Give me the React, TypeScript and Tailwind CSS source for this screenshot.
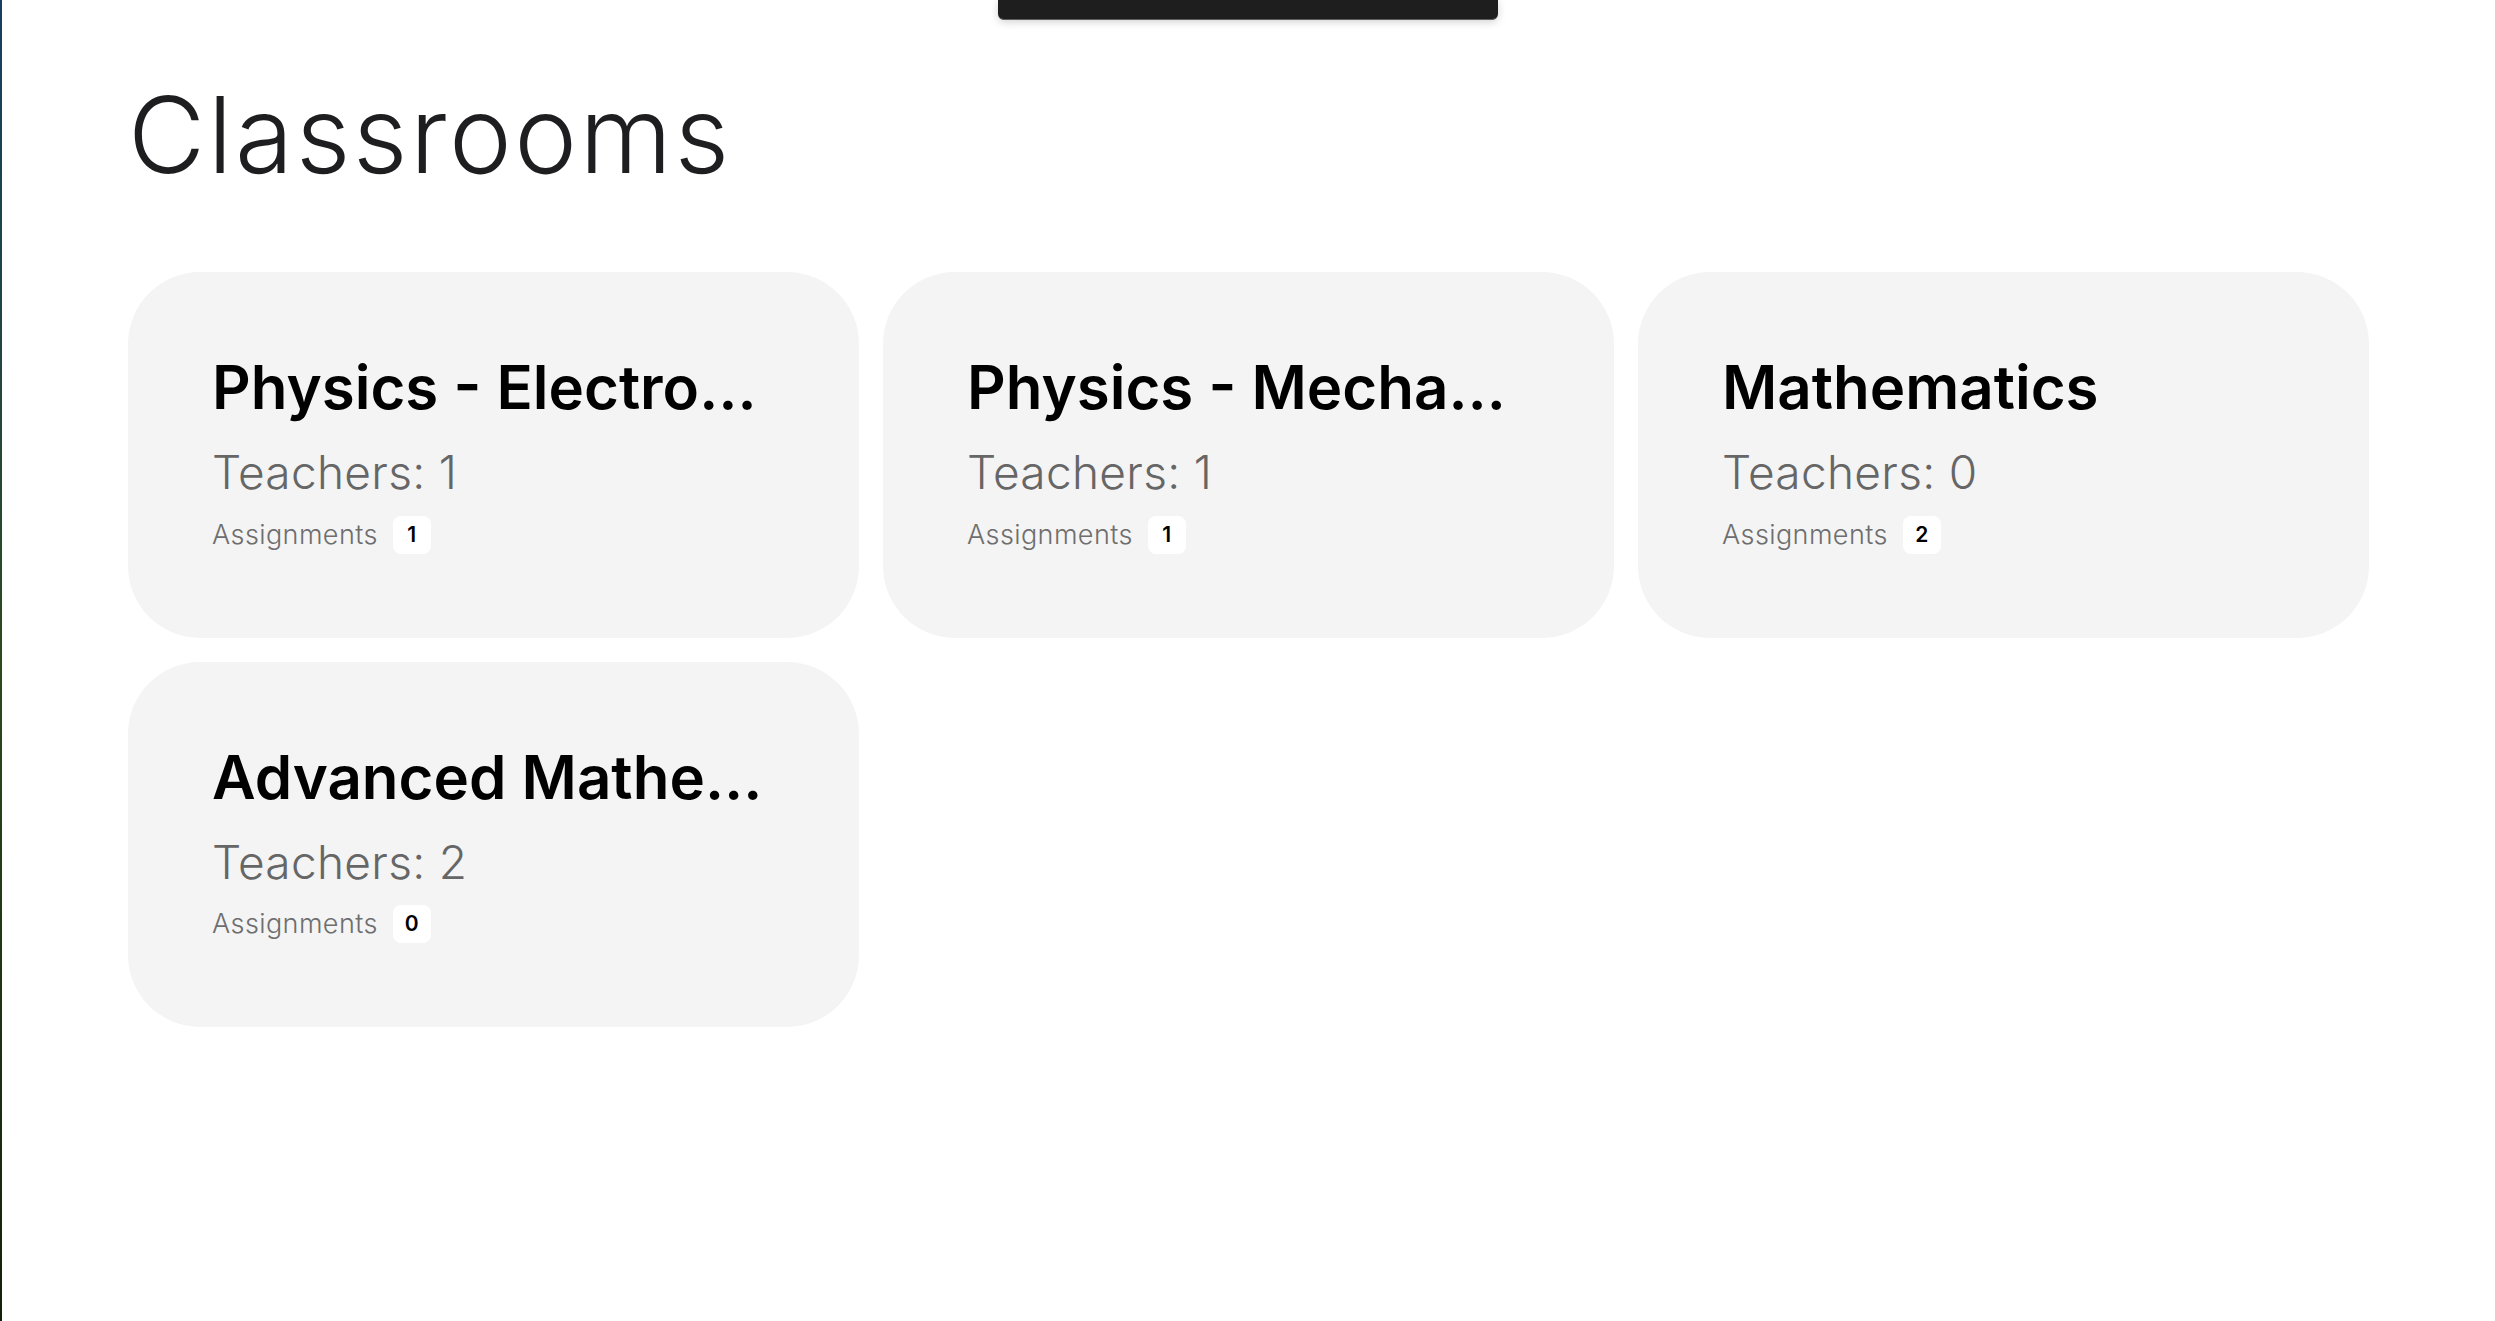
import React from "react";

type Classroom = {
  id: number;
  name: string;
  teachers: number;
  assignments: number;
};

const classrooms: Classroom[] = [
  { id: 1, name: "Physics - Electromagnetism", teachers: 1, assignments: 1 },
  { id: 2, name: "Physics - Mechanics", teachers: 1, assignments: 1 },
  { id: 3, name: "Mathematics", teachers: 0, assignments: 2 },
  { id: 4, name: "Advanced Mathematics", teachers: 2, assignments: 0 },
];

const ClassroomCard = ({ classroom }: { classroom: Classroom }) => {
  return (
    <div className="flex flex-col bg-[#f4f4f4] rounded-[72px] px-[84px] pt-[78px] pb-[84px] min-w-0">
      <h2 className="text-[60px] leading-[1.25] font-semibold text-black truncate">
        {classroom.name}
      </h2>
      <p className="mt-[19px] text-[46px] leading-[1.25] font-light text-[#666666] tracking-[0.3px]">
        Teachers: {classroom.teachers}
      </p>
      <div className="mt-[14px] flex items-center gap-[15px] h-[38px]">
        <span className="text-[27px] leading-[38px] font-light text-[#6e6e6e] tracking-[0.4px]">
          Assignments
        </span>
        <span className="flex items-center justify-center w-[38px] h-[38px] rounded-lg bg-white text-[21px] font-semibold text-black">
          {classroom.assignments}
        </span>
      </div>
    </div>
  );
};

export default function App() {
  return (
    <div className="relative flex min-h-[1321px] w-full bg-white font-['Inter','Noto_Sans',sans-serif]">
      {/* window edge */}
      <div className="w-[2px] shrink-0 bg-linear-to-b from-[#173d60] via-[#2c4a1c] to-[#141f0b]" />

      <main className="flex-1 px-[126px] pt-[82px]">
        <h1 className="text-[106px] leading-none font-light text-[#1e1e21] tracking-[2.5px]">
          Classrooms
        </h1>

        <div className="grid grid-cols-3 gap-6 mt-[84px]">
          {classrooms.map((classroom) => (
            <ClassroomCard key={classroom.id} classroom={classroom} />
          ))}
        </div>
      </main>

      {/* floating toolbar */}
      <div className="absolute top-0 left-[998px] w-[500px] h-[20px] bg-[#1e1e1e] rounded-b-[6px] border-b border-[#5c5c5c] shadow-[0_2px_8px_rgba(0,0,0,0.18)]" />
    </div>
  );
}
